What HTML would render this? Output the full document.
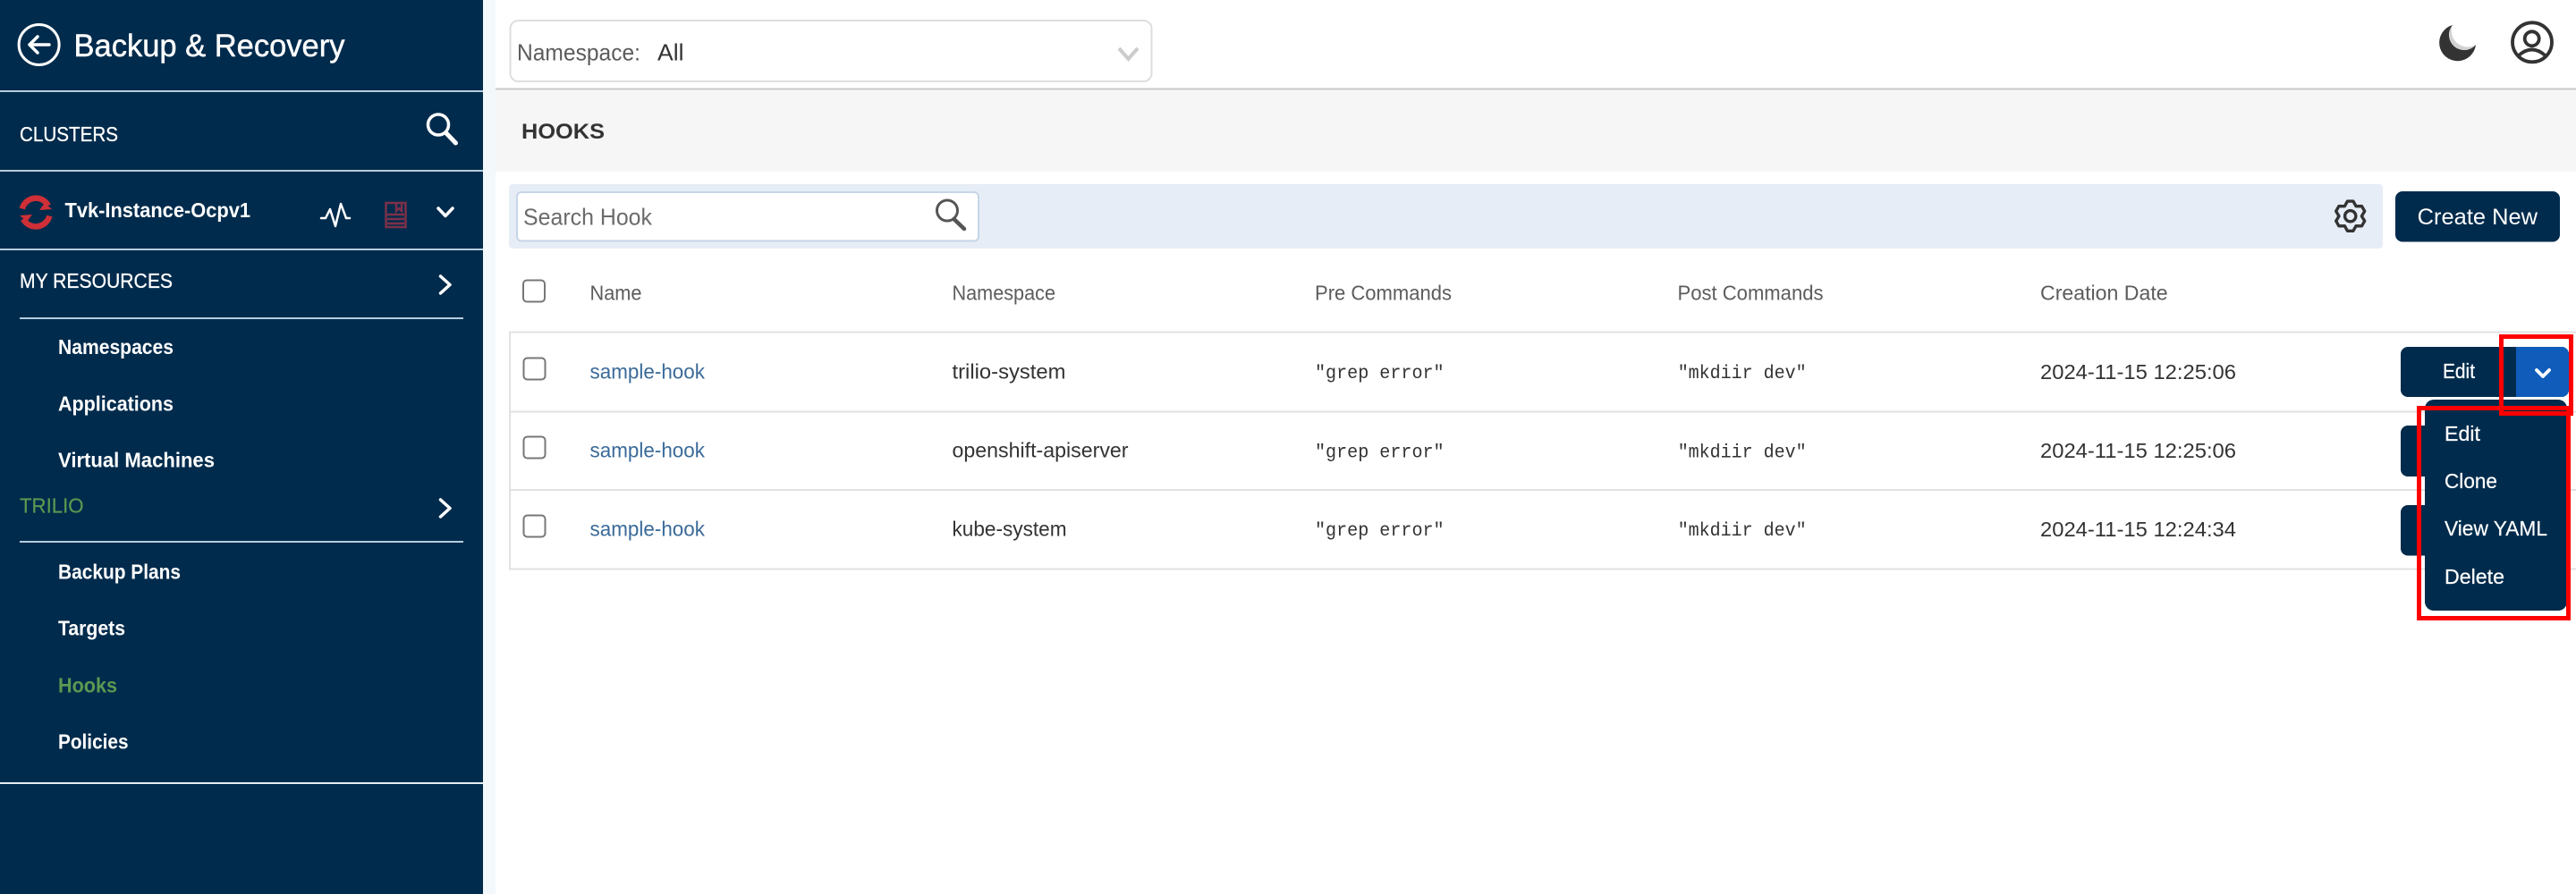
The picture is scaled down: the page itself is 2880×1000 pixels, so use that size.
<!DOCTYPE html>
<html lang="en">
<head>
<meta charset="utf-8">
<title>Backup &amp; Recovery - Hooks</title>
<style>
html,body{margin:0;padding:0;background:#fff;width:2880px;height:1000px;overflow:hidden}
svg{display:block}
text{font-family:"Liberation Sans",sans-serif;white-space:pre}
.w{fill:#fff;stroke:#fff;stroke-width:.45}
.m{font-size:23px;font-weight:bold;fill:#fff}
.s{font-size:23.500px;fill:#fff;stroke:#fff;stroke-width:.3}
.g{font-size:23.500px;fill:#5b9a52;stroke:#5b9a52;stroke-width:.2}
.h{font-size:23px;fill:#5c5c5c}
.l{font-size:23px;fill:#3a6a99}
.c{font-size:23px;fill:#333}
.t{font-family:"Liberation Mono",monospace;font-size:21px;fill:#333}
.i{font-size:23px;fill:#fff;stroke:#fff;stroke-width:.2}
.ln{stroke:#e1e1e1;stroke-width:2;fill:none}
.cb{fill:#fff;stroke:#777;stroke-width:2}
.wl{fill:none;stroke:#fff;stroke-linecap:round;stroke-linejoin:round}
</style>
</head>
<body>
<svg xmlns="http://www.w3.org/2000/svg" width="2880" height="1000" viewBox="0 0 2880 1000">
<rect width="2880" height="1000" fill="#fff"/>

<!-- sidebar -->
<rect x="0" y="0" width="540" height="1000" fill="#012b4c"/>
<rect x="540" y="0" width="14" height="1000" fill="#f3f8fb"/>
<circle cx="43.6" cy="50" r="22.5" fill="none" stroke="#fff" stroke-width="3"/>
<path class="wl" stroke-width="3.5" d="M55 50H33M42 41L33 50L42 59"/>
<text x="82.500" y="63" style="font-size:35px" class="w" textLength="303" lengthAdjust="spacingAndGlyphs">Backup &amp; Recovery</text>
<rect x="0" y="101" width="540" height="2" fill="#b4cde0"/>
<text x="22" y="158" class="s" textLength="110" lengthAdjust="spacingAndGlyphs">CLUSTERS</text>
<circle cx="490" cy="139.500" r="11.500" fill="none" stroke="#fff" stroke-width="3.5"/>
<path d="M498.500 148.500L509.500 160" stroke="#fff" stroke-width="5" stroke-linecap="round"/>
<rect x="0" y="190" width="540" height="2" fill="#b4cde0"/>

<!-- OpenShift logo -->
<g fill="none" stroke="#cf2f36" stroke-width="6.5">
<path d="M24.800 233.500A15.800 15.800 0 0 1 54 230"/>
<path d="M55.300 241.500A15.800 15.800 0 0 1 26 245"/>
</g>
<path d="M22 241L36 240L30 248Z M58 234L44 235L50 227Z" fill="#cf2f36"/>
<text x="72.5" y="243" class="m" textLength="207.500" lengthAdjust="spacingAndGlyphs">Tvk-Instance-Ocpv1</text>
<path class="wl" stroke-width="2.5" d="M359 244H364L369 234L375 253L381 228L387 244H391"/>
<g fill="none" stroke="#7c3049" stroke-width="2.5">
<rect x="431.500" y="227" width="22" height="27"/>
<path d="M433 240H452M433 245H452M433 250H452"/>
<path d="M443 228V236L446 233L449 236V228"/>
</g>
<path class="wl" stroke-width="3.5" d="M490 233L498 241.500L506 233"/>
<rect x="0" y="278" width="540" height="2" fill="#b4cde0"/>

<text x="22" y="322" class="s" textLength="171" lengthAdjust="spacingAndGlyphs">MY RESOURCES</text>
<path class="wl" stroke-width="3.5" d="M492.500 309L503 318.500L492.500 328"/>
<rect x="22" y="355" width="496" height="2" fill="#b4cde0"/>
<text x="65" y="396" class="m" textLength="129" lengthAdjust="spacingAndGlyphs">Namespaces</text>
<text x="65" y="459.500" class="m" textLength="129" lengthAdjust="spacingAndGlyphs">Applications</text>
<text x="65" y="522.500" class="m" textLength="175" lengthAdjust="spacingAndGlyphs">Virtual Machines</text>
<text x="22" y="573.500" class="g" textLength="71.500" lengthAdjust="spacingAndGlyphs">TRILIO</text>
<path class="wl" stroke-width="3.5" d="M492.500 559L503 568.500L492.500 578"/>
<rect x="22" y="605" width="496" height="2" fill="#b4cde0"/>
<text x="65" y="647.500" class="m" textLength="137" lengthAdjust="spacingAndGlyphs">Backup Plans</text>
<text x="65" y="710.500" class="m" textLength="75" lengthAdjust="spacingAndGlyphs">Targets</text>
<text x="65" y="774.500" class="m" style="fill:#5b9a52" textLength="66" lengthAdjust="spacingAndGlyphs">Hooks</text>
<text x="65" y="837.500" class="m" textLength="78.500" lengthAdjust="spacingAndGlyphs">Policies</text>
<rect x="0" y="875" width="540" height="2" fill="#e6eef2"/>

<!-- top bar -->
<rect x="570.500" y="23" width="717" height="68" rx="9" fill="#fff" stroke="#dedede" stroke-width="2"/>
<text x="578" y="67.500" style="font-size:26px;fill:#5c5c5c" textLength="138" lengthAdjust="spacingAndGlyphs">Namespace:</text>
<text x="735" y="67.500" style="font-size:26px;fill:#333" textLength="29.500" lengthAdjust="spacingAndGlyphs">All</text>
<path d="M1251 54L1261.500 66L1272 54" fill="none" stroke="#cccccc" stroke-width="4"/>

<!-- moon -->
<path d="M2742 28A20.500 20.500 0 1 0 2768 50A17.020 17.020 0 0 1 2742 28Z" fill="#333"/>
<path d="M2742 28A17.020 17.020 0 0 0 2768 50A18 18 0 0 1 2742 28Z" fill="#d2d2d2"/>
<!-- user -->
<g fill="none" stroke="#333" stroke-width="3.800">
<circle cx="2831" cy="47.300" r="22"/>
<circle cx="2830.700" cy="43.300" r="8"/>
<path d="M2816 62Q2830.700 49 2845.500 62"/>
</g>

<rect x="554" y="98.500" width="2326" height="2" fill="#c9c9c9"/>
<rect x="554" y="100.500" width="2326" height="91.500" fill="#f6f6f6"/>
<text x="583" y="155" style="font-size:24px;font-weight:bold;fill:#333" textLength="93" lengthAdjust="spacingAndGlyphs">HOOKS</text>

<!-- toolbar -->
<rect x="569" y="206" width="2095" height="72" rx="4" fill="#e6edf6"/>
<rect x="578" y="215" width="516" height="54.500" rx="5" fill="#fff" stroke="#c6d5e7" stroke-width="2"/>
<text x="585" y="251.500" style="font-size:26px;fill:#6b6b6b" textLength="144" lengthAdjust="spacingAndGlyphs">Search Hook</text>
<circle cx="1059" cy="235.500" r="11.500" fill="none" stroke="#555" stroke-width="3"/>
<path d="M1066.500 245L1078 256" stroke="#555" stroke-width="4.500" stroke-linecap="round"/>
<g transform="translate(2627.700 241.700) scale(0.94)" fill="none" stroke="#333" stroke-width="3.600" stroke-linejoin="round">
<path d="M-3.430 -17.670L3.430 -17.670L6.750 -11.690L13.580 -11.810L17.020 -5.860L13.500 0L17.020 5.860L13.580 11.810L6.750 11.690L3.430 17.670L-3.430 17.670L-6.750 11.690L-13.580 11.810L-17.020 5.860L-13.500 0L-17.020 -5.860L-13.580 -11.810L-6.750 -11.690Z"/>
<circle cx="0" cy="0" r="6.500"/>
</g>
<rect x="2678" y="214" width="184" height="56.500" rx="8" fill="#012b4c"/>
<text x="2702.700" y="251.200" style="font-size:25px;fill:#fff" textLength="134.300" lengthAdjust="spacingAndGlyphs">Create New</text>

<!-- table header -->
<rect class="cb" x="585" y="313.500" width="24" height="24" rx="4"/>
<text x="659.500" y="335.500" class="h" textLength="58" lengthAdjust="spacingAndGlyphs">Name</text>
<text x="1064.500" y="335.500" class="h" textLength="115.500" lengthAdjust="spacingAndGlyphs">Namespace</text>
<text x="1470" y="335.500" class="h" textLength="153" lengthAdjust="spacingAndGlyphs">Pre Commands</text>
<text x="1875.500" y="335.500" class="h" textLength="163" lengthAdjust="spacingAndGlyphs">Post Commands</text>
<text x="2281" y="335.500" class="h" textLength="142.600" lengthAdjust="spacingAndGlyphs">Creation Date</text>

<!-- table -->
<path class="ln" d="M2880 371.500H570V636.500H2880M570 460.500H2880M570 548H2880"/>

<rect class="cb" x="585.500" y="400.500" width="24" height="24" rx="4"/>
<text x="659.500" y="423.500" class="l" textLength="128.500" lengthAdjust="spacingAndGlyphs">sample-hook</text>
<text x="1064.500" y="423.500" class="c" textLength="127" lengthAdjust="spacingAndGlyphs">trilio-system</text>
<text x="1470" y="423" class="t" textLength="144.600" lengthAdjust="spacingAndGlyphs">"grep error"</text>
<text x="1875.700" y="423" class="t" textLength="144" lengthAdjust="spacingAndGlyphs">"mkdiir dev"</text>
<text x="2281" y="424" class="c" textLength="219" lengthAdjust="spacingAndGlyphs">2024-11-15 12:25:06</text>

<rect class="cb" x="585.500" y="488.500" width="24" height="24" rx="4"/>
<text x="659.500" y="511.500" class="l" textLength="128.500" lengthAdjust="spacingAndGlyphs">sample-hook</text>
<text x="1064.500" y="511.500" class="c" textLength="197" lengthAdjust="spacingAndGlyphs">openshift-apiserver</text>
<text x="1470" y="511.500" class="t" textLength="144.600" lengthAdjust="spacingAndGlyphs">"grep error"</text>
<text x="1875.700" y="511.500" class="t" textLength="144" lengthAdjust="spacingAndGlyphs">"mkdiir dev"</text>
<text x="2281" y="512" class="c" textLength="219" lengthAdjust="spacingAndGlyphs">2024-11-15 12:25:06</text>

<rect class="cb" x="585.500" y="576.500" width="24" height="24" rx="4"/>
<text x="659.500" y="599.500" class="l" textLength="128.500" lengthAdjust="spacingAndGlyphs">sample-hook</text>
<text x="1064.500" y="599.500" class="c" textLength="128" lengthAdjust="spacingAndGlyphs">kube-system</text>
<text x="1470" y="599" class="t" textLength="144.600" lengthAdjust="spacingAndGlyphs">"grep error"</text>
<text x="1875.700" y="599" class="t" textLength="144" lengthAdjust="spacingAndGlyphs">"mkdiir dev"</text>
<text x="2281" y="600" class="c" textLength="219" lengthAdjust="spacingAndGlyphs">2024-11-15 12:24:34</text>

<!-- row actions -->
<rect x="2684" y="476" width="120" height="57" rx="8" fill="#012b4c"/>
<rect x="2684" y="565" width="120" height="56.500" rx="8" fill="#012b4c"/>
<rect x="2684" y="388" width="188" height="56" rx="8" fill="#012b4c"/>
<path d="M2813 388H2864A8 8 0 0 1 2872 396V436A8 8 0 0 1 2864 444H2813Z" fill="#0f5cbb"/>
<text x="2731" y="423" class="i" textLength="36" lengthAdjust="spacingAndGlyphs">Edit</text>
<path class="wl" stroke-width="3.800" d="M2836 414L2843 421L2850 414"/>

<!-- dropdown -->
<rect x="2711" y="447" width="159" height="236" rx="10" fill="#012b4c"/>
<text x="2733" y="493" class="i" textLength="40" lengthAdjust="spacingAndGlyphs">Edit</text>
<text x="2733" y="546" class="i" textLength="59" lengthAdjust="spacingAndGlyphs">Clone</text>
<text x="2733" y="599" class="i" textLength="115" lengthAdjust="spacingAndGlyphs">View YAML</text>
<text x="2733" y="653" class="i" textLength="67" lengthAdjust="spacingAndGlyphs">Delete</text>

<!-- annotations -->
<rect x="2796.500" y="376.500" width="78" height="86" fill="none" stroke="#f00" stroke-width="5"/>
<rect x="2704.500" y="456.500" width="167" height="235" fill="none" stroke="#f00" stroke-width="5"/>
</svg>
</body>
</html>
